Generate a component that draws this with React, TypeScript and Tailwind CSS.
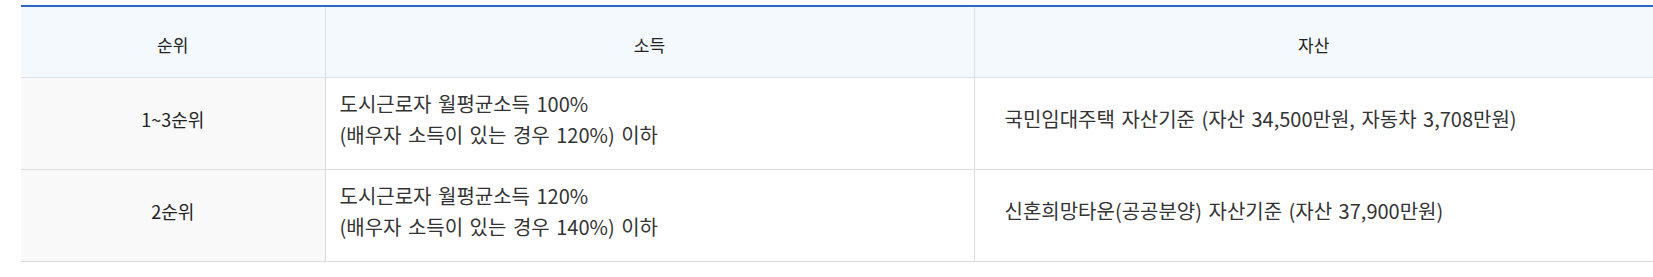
const rows = [
  {
    rank: "1~3순위",
    income: ["도시근로자 월평균소득 100%", "(배우자 소득이 있는 경우 120%) 이하"],
    asset: "국민임대주택 자산기준 (자산 34,500만원, 자동차 3,708만원)",
  },
  {
    rank: "2순위",
    income: ["도시근로자 월평균소득 120%", "(배우자 소득이 있는 경우 140%) 이하"],
    asset: "신혼희망타운(공공분양) 자산기준 (자산 37,900만원)",
  },
];

export default function App() {
  return (
    <div
      className="bg-white w-[1653px] h-[277px] overflow-hidden pt-[5px] pl-[21px]"
      style={{ fontFamily: '"Noto Sans CJK KR", "Noto Sans", sans-serif' }}
    >
      <table className="w-[1632px] table-fixed border-collapse border-t-[2px] border-[#2b66c9]">
        <colgroup>
          <col className="w-[304px]" />
          <col className="w-[649px]" />
          <col className="w-[679px]" />
        </colgroup>
        <thead>
          <tr className="h-[71px] bg-[#f4f9fe] border-b border-[#dcdfe3]">
            <th className="pt-[6px] font-normal text-[17px] text-[#222] border-r border-[#dcdfe3]">순위</th>
            <th className="pt-[6px] font-normal text-[17px] text-[#222] border-r border-[#dcdfe3]">소득</th>
            <th className="pt-[6px] font-normal text-[17px] text-[#222]">자산</th>
          </tr>
        </thead>
        <tbody>
          {rows.map((row) => (
            <tr key={row.rank} className="h-[92px] border-b border-[#dcdcdc]">
              <td className="pb-[8px] bg-[#f9f9f9] text-center text-[18px] text-[#222] border-r border-[#dcdcdc]">
                {row.rank}
              </td>
              <td className="pb-[8px] px-[14px] text-[20px] leading-[31px] text-[#333] border-r border-[#dcdcdc] [word-spacing:2px]">
                {row.income.map((line) => (
                  <div key={line}>{line}</div>
                ))}
              </td>
              <td className="pb-[8px] pl-[30px] pr-[12px] text-[20px] text-[#333] [word-spacing:2px]">{row.asset}</td>
            </tr>
          ))}
        </tbody>
      </table>
    </div>
  );
}
